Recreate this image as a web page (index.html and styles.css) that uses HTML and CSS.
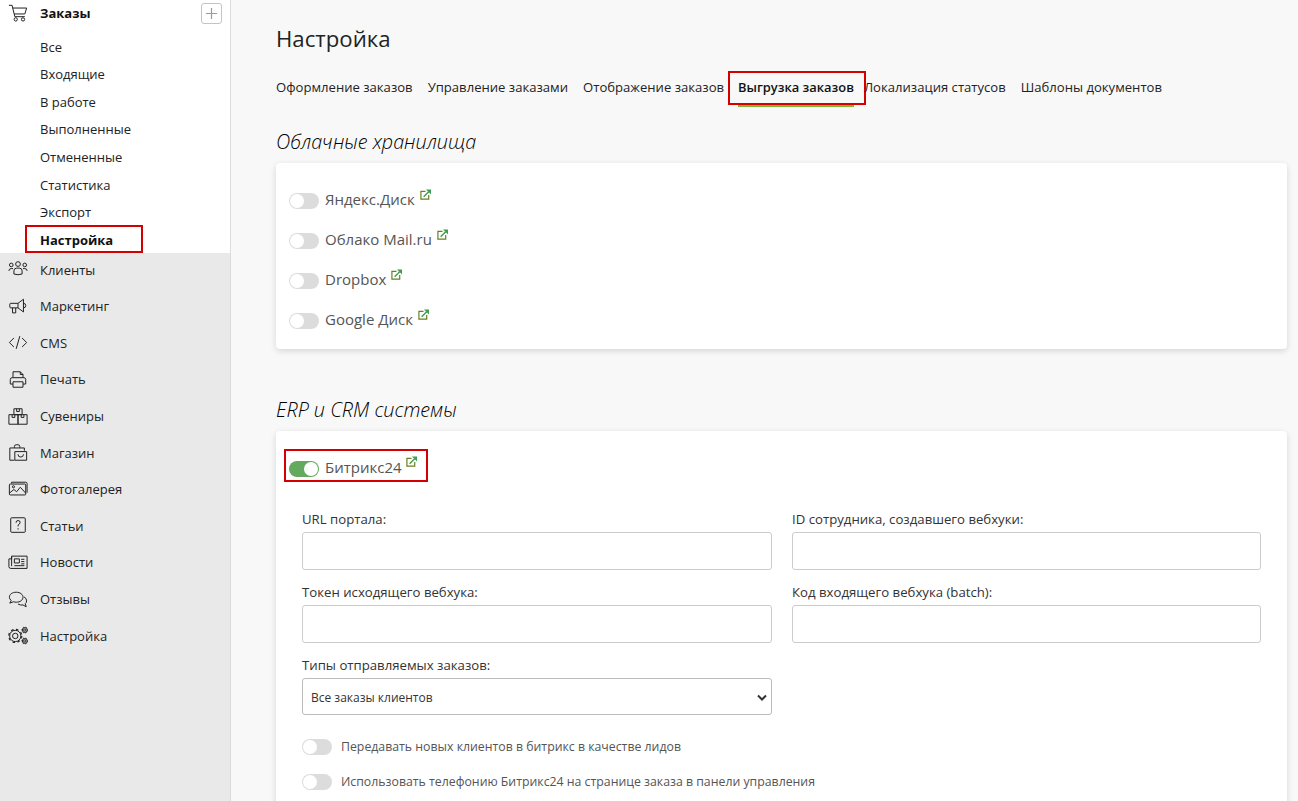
FILE: index.html
```html
<!DOCTYPE html>
<html lang="ru">
<head>
<meta charset="utf-8">
<title>Настройка</title>
<link rel="stylesheet" href="styles.css">
</head>
<body>
<div class="app">
  <aside class="sidebar">
    <section class="orders">
      <div class="orders-head">
        <svg class="icon" viewBox="0 0 22 20"><path d="M1 1h3.500l3 12.500h11M5.200 4H20.500l-2 6.500H6.800"/><circle cx="8.500" cy="16.500" r="1.800"/><circle cx="16.500" cy="16.500" r="1.800"/></svg>
        <a class="orders-title">Заказы</a>
        <span class="add-btn"><svg viewBox="0 0 14 14"><path d="M7 1v12M1 7h12"/></svg></span>
      </div>
      <ul class="submenu">
        <li>Все</li>
        <li>Входящие</li>
        <li>В работе</li>
        <li>Выполненные</li>
        <li>Отмененные</li>
        <li>Статистика</li>
        <li>Экспорт</li>
        <li class="current">Настройка</li>
      </ul>
    </section>
    <nav class="mainmenu">
      <a class="menu-item"><svg class="icon" viewBox="0 0 22 20"><circle cx="11" cy="4" r="2.600"/><circle cx="3.600" cy="5" r="2"/><circle cx="18.400" cy="5" r="2"/><path d="M6.500 15v-3.500q0-3 3-3h3q3 0 3 3V15q-4.500 1.500-9 0zM1 11.500Q1 9 3.500 9h2M21 11.500Q21 9 18.500 9h-2"/></svg>Клиенты</a>
      <a class="menu-item"><svg class="icon" viewBox="0 0 22 20"><path d="M3 6.500h8L17 2v14l-6-4.500H3q-1 0-1-1v-3q0-1 1-1zM11 6.500v5M5 11.500V17h3.500v-5.500M17 6.500q2.500 0 2.500 2.500T17 11.500"/></svg>Маркетинг</a>
      <a class="menu-item"><svg class="icon" viewBox="0 0 22 20"><path d="M6.500 5l-5 5 5 5M15.500 5l5 5-5 5M13 3L9 17"/></svg>CMS</a>
      <a class="menu-item"><svg class="icon" viewBox="0 0 22 20"><path d="M5.500 8V1.500h8l3 3V8M5.500 15h-3v-5q0-2 2-2h13q2 0 2 2v5h-3M5.500 12.500h11v6h-11zM13.500 1.500v3h3"/></svg>Печать</a>
      <a class="menu-item"><svg class="icon" viewBox="0 0 22 20"><path d="M6.500 8V1.500h9V8zM1 8h10v10.500H1zM11 8h10v10.500H11zM9.500 1.500v3h3v-3M4.500 8v3h3V8M14.500 8v3h3V8"/></svg>Сувениры</a>
      <a class="menu-item"><svg class="icon" viewBox="0 0 22 20"><path d="M7 5V3.500q0-2 2-2h2q2 0 2 2V5M2 5h16v3M2 5v13.500h5M7.500 9h13v9.500h-13zM11 12q0 3 3 3t3-3"/></svg>Магазин</a>
      <a class="menu-item"><svg class="icon" viewBox="0 0 22 20"><path d="M4 3.500V2h15.500Q21 2 21 3.500v10M2.500 4h16q1 0 1 1v10q0 1-1 1h-16q-1 0-1-1V5q0-1 1-1zM1.500 14l5-4 3 2.500 4-5 6 6.500"/><circle cx="6" cy="7" r="1.200"/></svg>Фотогалерея</a>
      <a class="menu-item"><svg class="icon" viewBox="0 0 22 20"><rect x="3" y="1.500" width="16" height="16" rx="1"/><path d="M8.800 7q0-2.500 2.300-2.500t2.200 2.300q0 1.400-2.200 2.700V11M11.100 13v1.500"/></svg>Статьи</a>
      <a class="menu-item"><svg class="icon" viewBox="0 0 22 20"><path d="M4 3h17v13.500H3q-2 0-2-2V6h3zM4 3v11M7 6h5.500v4.500H7zM14.500 6.500H18M14.500 9H18M14.500 11.500H18M7 13.500h11"/></svg>Новости</a>
      <a class="menu-item"><svg class="icon" viewBox="0 0 22 20"><path d="M9 2C4.500 2 1.500 4.500 1.500 7.500q0 2 2 3.500L2 14l4-1.500q1.500.5 3 .5c4.500 0 7.500-2.500 7.500-5.500S13.500 2 9 2zM17.500 7q3 1.500 3 4.500 0 2-1.500 3l1 3.500-3.500-2q-3 .5-5.500-1"/></svg>Отзывы</a>
      <a class="menu-item"><svg class="icon" viewBox="0 0 22 20"><circle cx="8" cy="10.500" r="3"/><circle cx="8" cy="10.500" r="6.200"/><circle class="gear-big" cx="8" cy="10.500" r="7.200"/><circle cx="18.500" cy="4" r="1.300"/><circle cx="18.500" cy="4" r="2.700"/><circle class="gear-small" cx="18.500" cy="4" r="3.300"/><circle cx="18.500" cy="16" r="1.300"/><circle cx="18.500" cy="16" r="2.700"/><circle class="gear-small" cx="18.500" cy="16" r="3.300"/></svg>Настройка</a>
    </nav>
  </aside>

  <main class="content">
    <h1 class="page-title">Настройка</h1>
    <div class="tabs">
      <a class="tab">Оформление заказов</a>
      <a class="tab">Управление заказами</a>
      <a class="tab">Отображение заказов</a>
      <a class="tab active">Выгрузка заказов</a>
      <a class="tab">Локализация статусов</a>
      <a class="tab">Шаблоны документов</a>
    </div>

    <h2 class="section-title">Облачные хранилища</h2>
    <section class="card cloud-card">
      <div class="service"><span class="toggle"></span><span class="service-name">Яндекс.Диск</span><svg class="ext" viewBox="0 0 12 12"><path class="ext-box" d="M6 2.500H1v8.500h8.500V6.500"/><path class="ext-arrow" d="M4 8.500L9.500 3"/><path class="ext-head" d="M6.500.5H12V6z"/></svg></div>
      <div class="service"><span class="toggle"></span><span class="service-name">Облако Mail.ru</span><svg class="ext" viewBox="0 0 12 12"><path class="ext-box" d="M6 2.500H1v8.500h8.500V6.500"/><path class="ext-arrow" d="M4 8.500L9.500 3"/><path class="ext-head" d="M6.500.5H12V6z"/></svg></div>
      <div class="service"><span class="toggle"></span><span class="service-name">Dropbox</span><svg class="ext" viewBox="0 0 12 12"><path class="ext-box" d="M6 2.500H1v8.500h8.500V6.500"/><path class="ext-arrow" d="M4 8.500L9.500 3"/><path class="ext-head" d="M6.500.5H12V6z"/></svg></div>
      <div class="service"><span class="toggle"></span><span class="service-name">Google Диск</span><svg class="ext" viewBox="0 0 12 12"><path class="ext-box" d="M6 2.500H1v8.500h8.500V6.500"/><path class="ext-arrow" d="M4 8.500L9.500 3"/><path class="ext-head" d="M6.500.5H12V6z"/></svg></div>
    </section>

    <h2 class="section-title erp-title">ERP и CRM системы</h2>
    <section class="card erp-card">
      <div class="service bitrix"><span class="toggle on"></span><span class="service-name">Битрикс24</span><svg class="ext" viewBox="0 0 12 12"><path class="ext-box" d="M6 2.500H1v8.500h8.500V6.500"/><path class="ext-arrow" d="M4 8.500L9.500 3"/><path class="ext-head" d="M6.500.5H12V6z"/></svg></div>
      <div class="form-grid">
        <label class="field"><span>URL портала:</span><input type="text"></label>
        <label class="field"><span>ID сотрудника, создавшего вебхуки:</span><input type="text"></label>
        <label class="field"><span>Токен исходящего вебхука:</span><input type="text"></label>
        <label class="field"><span>Код входящего вебхука (batch):</span><input type="text"></label>
        <label class="field"><span>Типы отправляемых заказов:</span>
          <span class="select">Все заказы клиентов<svg viewBox="0 0 10 7"><path d="M1 1.500l4 4 4-4"/></svg></span>
        </label>
      </div>
      <div class="option"><span class="toggle"></span>Передавать новых клиентов в битрикс в качестве лидов</div>
      <div class="option"><span class="toggle"></span>Использовать телефонию Битрикс24 на странице заказа в панели управления</div>
    </section>
  </main>
</div>
</body>
</html>
```
FILE: styles.css
```css
* { box-sizing: border-box; }
html, body { margin: 0; height: 100%; overflow: hidden; }
body {
  font-family: "Open Sans", "Noto Sans", sans-serif;
  font-size: 13px;
  color: #222;
  background: #f8f8f8;
}
.app { display: flex; height: 801px; overflow: hidden; }

.sidebar {
  width: 231px;
  flex: none;
  background: #e9e9e9;
  border-right: 1px solid #dcdcdc;
}
.orders { background: #fff; height: 253px; }
.orders-head { display: flex; align-items: center; height: 26px; padding-left: 8px; }
.icon {
  width: 20px;
  height: 19px;
  flex: none;
  margin-right: 12px;
  fill: none;
  stroke: #222;
  stroke-width: 1.100;
}
.gear-big { stroke-width: 1.300; stroke-dasharray: 2.800 2.850; }
.gear-small { stroke-width: .900; stroke-dasharray: 1.500 1.700; }
.orders-title { font-weight: 700; color: #111; }
.add-btn {
  margin-left: auto;
  margin-right: 8px;
  width: 21px;
  height: 21px;
  border: 1px solid #c4c4c4;
  border-radius: 3px;
  display: flex;
  align-items: center;
  justify-content: center;
}
.add-btn svg { width: 13px; height: 13px; fill: none; stroke: #999; stroke-width: 1.300; }
.submenu { list-style: none; margin: 7.600px 0 0; padding: 0 0 0 40px; }
.submenu li { height: 27.600px; line-height: 27.600px; color: #222; }
.submenu .current { position: relative; font-weight: 700; color: #111; }
.submenu .current::after {
  content: "";
  position: absolute;
  left: -15px;
  top: -2px;
  width: 114px;
  height: 24px;
  border: 2px solid #d40000;
}
.mainmenu { margin-top: -1.600px; display: flex; flex-direction: column; }
.menu-item {
  display: flex;
  align-items: center;
  height: 36.600px;
  padding-left: 8px;
  color: #222;
}

.content { flex: 1; min-width: 0; padding: 0 11px 0 45px; }
.page-title { margin: 24px 0 0; font-size: 22.200px; line-height: 30px; font-weight: 400; color: #222; }
.tabs { display: flex; margin-top: 17px; height: 34px; }
.tab {
  position: relative;
  height: 32px;
  line-height: 32px;
  margin-right: 15px;
  white-space: nowrap;
  font-size: 13.100px;
  color: #222;
}
.tab.active {
  margin-left: -1px;
  margin-right: 10px;
  font-size: 12.900px;
  font-weight: 600;
  color: #111;
  border-bottom: 3px solid #7cb82f;
  height: 36px;
}
.tab.active::after {
  content: "";
  position: absolute;
  left: -10px;
  right: -12px;
  top: 0;
  height: 30px;
  border: 2px solid #d40000;
}
.section-title {
  margin: 24px 0 0;
  font-size: 19.800px;
  line-height: 26px;
  font-weight: 300;
  font-style: italic;
  color: #000;
}
.erp-title { margin-top: 48px; }
.card {
  background: #fff;
  border-radius: 4px;
  box-shadow: 0 2px 6px rgba(0, 0, 0, .14);
  margin-top: 8px;
  padding: 0 13px;
}
.cloud-card { height: 186px; padding-top: 17px; }
.erp-card { height: 420px; padding-top: 18px; }
.service { display: flex; align-items: center; height: 40px; font-size: 15px; color: #555; }
.service-name { margin: -2px 0 0 6px; }
.service .toggle { margin-top: 2px; }
.toggle {
  position: relative;
  display: inline-block;
  flex: none;
  width: 30px;
  height: 16px;
  border-radius: 8px;
  background: #dcdcdc;
}
.toggle::before {
  content: "";
  position: absolute;
  left: 1px;
  top: 1px;
  width: 14px;
  height: 14px;
  border-radius: 50%;
  background: #fff;
}
.toggle.on { background: #63a95e; }
.toggle.on::before { left: 15px; }
.ext { width: 11px; height: 11px; margin: -12px 0 0 5px; fill: none; stroke-width: 1.300; }
.ext-box { stroke: #6b7f1e; }
.ext-arrow { stroke: #3f9f4f; stroke-width: 1.600; }
.ext-head { fill: #3f9f4f; }
.bitrix { position: relative; width: fit-content; height: 33px; padding-top: 5px; }
.bitrix .ext { margin-left: 4px; margin-top: -13px; }
.bitrix::after {
  content: "";
  position: absolute;
  left: -5px;
  top: 0;
  width: 140px;
  height: 29px;
  border: 2px solid #d40000;
}
.form-grid {
  display: grid;
  grid-template-columns: 470px 469px;
  column-gap: 20px;
  margin: 27px 0 0 13px;
}
.field { display: flex; flex-direction: column; height: 73px; color: #333; font-size: 13.200px; }
.field > span:first-child { height: 23px; line-height: 20px; }
.field input {
  display: block;
  width: 100%;
  height: 38px;
  border: 1px solid #ccc;
  border-radius: 3px;
  background: #fff;
  padding: 0;
}
.select {
  display: flex;
  align-items: center;
  justify-content: space-between;
  height: 37px;
  border: 1px solid #bbb;
  border-radius: 3px;
  padding: 1px 4px 0 8px;
  font-size: 12px;
  color: #333;
}
.select svg { width: 10px; height: 7px; fill: none; stroke: #333; stroke-width: 2; }
.option { display: flex; align-items: center; height: 35px; margin-left: 13px; font-size: 12.300px; color: #555; }
.option .toggle { margin-right: 9px; }
.form-grid + .option { margin-top: 1px; }
```
